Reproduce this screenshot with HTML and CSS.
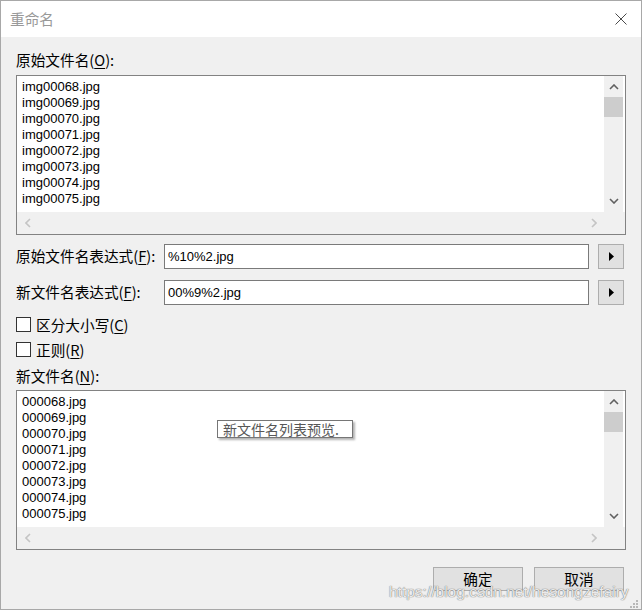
FILE: index.html
```html
<!doctype html>
<html lang="zh">

<head>
    <meta charset="utf-8">
    <title>重命名</title>
    <link rel="stylesheet" href="styles.css">
</head>

<body>
    <div class="dialog">
        <div class="titlebar">
            <span class="title">重命名</span>
            <svg class="close" width="12" height="12" viewBox="0 0 12 12">
                <path d="M0.5 0.5 L11.5 11.5 M11.5 0.5 L0.5 11.5" stroke="#4a4a4a" stroke-width="1" fill="none" />
            </svg>
        </div>

        <div class="content">
            <div class="label label_top">原始文件名(<u>O</u>):</div>
            <div class="listbox">
                <div class="list_main">
                    <div class="items">
                        <div>img00068.jpg</div>
                        <div>img00069.jpg</div>
                        <div>img00070.jpg</div>
                        <div>img00071.jpg</div>
                        <div>img00072.jpg</div>
                        <div>img00073.jpg</div>
                        <div>img00074.jpg</div>
                        <div>img00075.jpg</div>
                    </div>
                    <div class="vscroll">
                        <div class="arrow"><svg width="10" height="6" viewBox="0 0 10 6"><path d="M1 5 L5 1 L9 5" stroke="#606060" stroke-width="1.6" fill="none" /></svg></div>
                        <div class="thumb"></div>
                        <div class="spacer"></div>
                        <div class="arrow arrow_down"><svg width="10" height="6" viewBox="0 0 10 6"><path d="M1 1 L5 5 L9 1" stroke="#606060" stroke-width="1.6" fill="none" /></svg></div>
                    </div>
                </div>
                <div class="hscroll">
                    <div class="harrow"><svg width="6" height="10" viewBox="0 0 6 10"><path d="M5 1 L1 5 L5 9" stroke="#c4c4c4" stroke-width="1.6" fill="none" /></svg></div>
                    <div class="spacer"></div>
                    <div class="harrow"><svg width="6" height="10" viewBox="0 0 6 10"><path d="M1 1 L5 5 L1 9" stroke="#c4c4c4" stroke-width="1.6" fill="none" /></svg></div>
                </div>
            </div>

            <div class="row row_first">
                <div class="row_label">原始文件名表达式(<u>F</u>):</div>
                <div class="textbox">%10%2.jpg</div>
                <div class="tri_button"><svg width="5" height="9" viewBox="0 0 5 9"><path d="M0 0 L5 4.5 L0 9 Z" fill="#000" /></svg></div>
            </div>
            <div class="row row_second">
                <div class="row_label">新文件名表达式(<u>F</u>):</div>
                <div class="textbox">00%9%2.jpg</div>
                <div class="tri_button"><svg width="5" height="9" viewBox="0 0 5 9"><path d="M0 0 L5 4.5 L0 9 Z" fill="#000" /></svg></div>
            </div>

            <div class="check check_first"><span class="box"></span>区分大小写(<u>C</u>)</div>
            <div class="check check_second"><span class="box"></span>正则(<u>R</u>)</div>

            <div class="label label_new">新文件名(<u>N</u>):</div>
            <div class="listbox">
                <div class="list_main">
                    <div class="items">
                        <div>000068.jpg</div>
                        <div>000069.jpg</div>
                        <div>000070.jpg</div>
                        <div>000071.jpg</div>
                        <div>000072.jpg</div>
                        <div>000073.jpg</div>
                        <div>000074.jpg</div>
                        <div>000075.jpg</div>
                    </div>
                    <div class="vscroll">
                        <div class="arrow"><svg width="10" height="6" viewBox="0 0 10 6"><path d="M1 5 L5 1 L9 5" stroke="#606060" stroke-width="1.6" fill="none" /></svg></div>
                        <div class="thumb"></div>
                        <div class="spacer"></div>
                        <div class="arrow arrow_down"><svg width="10" height="6" viewBox="0 0 10 6"><path d="M1 1 L5 5 L9 1" stroke="#606060" stroke-width="1.6" fill="none" /></svg></div>
                    </div>
                </div>
                <div class="hscroll">
                    <div class="harrow"><svg width="6" height="10" viewBox="0 0 6 10"><path d="M5 1 L1 5 L5 9" stroke="#c4c4c4" stroke-width="1.6" fill="none" /></svg></div>
                    <div class="spacer"></div>
                    <div class="harrow"><svg width="6" height="10" viewBox="0 0 6 10"><path d="M1 1 L5 5 L1 9" stroke="#c4c4c4" stroke-width="1.6" fill="none" /></svg></div>
                </div>
            </div>

            <div class="buttons">
                <div class="button">确定</div>
                <div class="button">取消</div>
            </div>
        </div>

        <div class="tooltip">新文件名列表预览.</div>
        <div class="watermark">https://blog.csdn.net/hesongzefairy</div>
        <svg class="grip" width="10" height="10" viewBox="0 0 10 10">
            <rect x="7" y="1" width="2" height="2" fill="#b8b8b8" />
            <rect x="4" y="4" width="2" height="2" fill="#b8b8b8" />
            <rect x="7" y="4" width="2" height="2" fill="#b8b8b8" />
            <rect x="1" y="7" width="2" height="2" fill="#b8b8b8" />
            <rect x="4" y="7" width="2" height="2" fill="#b8b8b8" />
            <rect x="7" y="7" width="2" height="2" fill="#b8b8b8" />
        </svg>
    </div>
</body>

</html>
```

FILE: styles.css
```css
body {
    margin: 0;
    background-color: #fff;
    font-family: "Noto Sans CJK SC", "Noto Sans", sans-serif;
    font-size: 14.67px;
    color: #000;
}

u {
    text-decoration: underline;
    text-underline-offset: 2px;
    text-decoration-thickness: 1px;
}

.dialog {
    position: relative;
    width: 642px;
    height: 610px;
    box-sizing: border-box;
    border: 1px solid #a8a8a8;
    background-color: #f0f0f0;
}

.titlebar {
    height: 36px;
    background-color: #fff;
    display: flex;
    align-items: center;
    justify-content: space-between;
    padding: 0 14px 0 9px;
}

.title {
    color: #999;
    line-height: 20px;
}

.close {
    display: block;
}

.content {
    padding: 0 15px;
    display: flex;
    flex-direction: column;
}

.label {
    line-height: 20px;
    height: 20px;
}

.label_top {
    margin-top: 13px;
}

.label_new {
    margin-top: 9px;
}

/* list boxes */
.listbox {
    margin-top: 5px;
    height: 160px;
    box-sizing: border-box;
    border: 1px solid #828282;
    background-color: #fff;
    display: flex;
    flex-direction: column;
}

.label_new + .listbox {
    margin-top: 4px;
}

.list_main {
    flex: 1;
    display: flex;
    min-height: 0;
}

.items {
    flex: 1;
    padding: 3px 5px;
    font-family: "Liberation Sans", Arial, sans-serif;
    font-size: 13px;
    line-height: 16px;
    overflow: hidden;
}

.vscroll {
    width: 19px;
    margin-right: 2px;
    background-color: #f0f0f0;
    display: flex;
    flex-direction: column;
}

.arrow {
    height: 21px;
    display: flex;
    align-items: center;
    justify-content: center;
}

.arrow_down {
    margin-bottom: 1px;
}

.thumb {
    height: 20px;
    background-color: #cdcdcd;
}

.spacer {
    flex: 1;
}

.hscroll {
    height: 22px;
    background-color: #f0f0f0;
    display: flex;
    padding-right: 21px;
}

.harrow {
    width: 21px;
    display: flex;
    align-items: center;
    justify-content: center;
}

/* expression rows */
.row {
    display: flex;
    height: 25px;
    margin-right: 2px;
}

.row_first {
    margin-top: 9px;
}

.row_second {
    margin-top: 11px;
}

.row_label {
    flex: 0 0 148px;
    line-height: 23px;
}

.textbox {
    flex: 1;
    box-sizing: border-box;
    border: 1px solid #7a7a7a;
    background-color: #fff;
    padding: 0 3px;
    font-family: "Liberation Sans", Arial, sans-serif;
    font-size: 13px;
    line-height: 23px;
}

.tri_button {
    flex: 0 0 26px;
    margin-left: 9px;
    box-sizing: border-box;
    border: 1px solid #adadad;
    background-color: #e1e1e1;
    display: flex;
    align-items: center;
    justify-content: center;
}

/* check boxes */
.check {
    display: flex;
    align-items: center;
    height: 15px;
    line-height: 15px;
}

.check_first {
    margin-top: 12px;
}

.check_second {
    margin-top: 10px;
}

.box {
    width: 15px;
    height: 15px;
    box-sizing: border-box;
    border: 1px solid #333;
    background-color: #fff;
    margin-right: 5px;
}

/* bottom buttons */
.buttons {
    display: flex;
    justify-content: flex-end;
    gap: 11px;
    margin-top: 17px;
    margin-right: 2px;
}

.button {
    width: 90px;
    height: 24px;
    box-sizing: border-box;
    border: 1px solid #adadad;
    background-color: #e1e1e1;
    text-align: center;
    line-height: 22px;
}

/* overlays */
.tooltip {
    position: absolute;
    left: 216px;
    top: 419px;
    width: 136px;
    height: 18px;
    box-sizing: border-box;
    border: 1px solid #767676;
    background-color: #fff;
    color: #575757;
    font-size: 14px;
    line-height: 16px;
    padding-left: 5px;
    white-space: nowrap;
    box-shadow: 2px 2px 2px rgba(0, 0, 0, 0.3);
}

.watermark {
    position: absolute;
    left: 388px;
    top: 582px;
    font-family: "Liberation Sans", Arial, sans-serif;
    font-size: 15.5px;
    color: rgba(255, 255, 255, 0.85);
    text-shadow: 0 0 1px #7a7a7a, 0 0 1px #7a7a7a;
    white-space: nowrap;
}

.grip {
    position: absolute;
    right: 2px;
    bottom: 0px;
}
```
